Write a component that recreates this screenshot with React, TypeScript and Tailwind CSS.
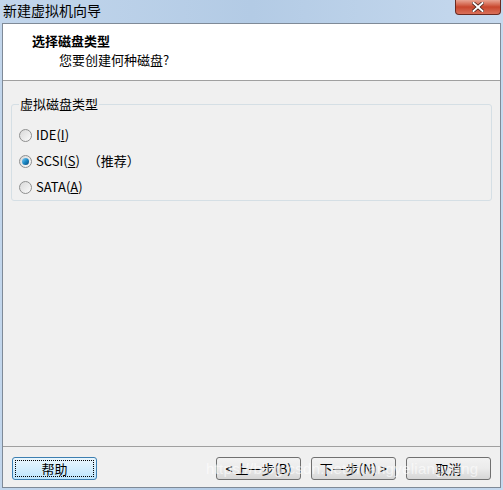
const font = {
  fontFamily: '"Noto Sans CJK SC", "DejaVu Sans", sans-serif',
};

const Radio = ({ checked = false }) => (
  <span className="relative flex h-[13px] w-[13px] items-center justify-center rounded-full border border-[#8e8f8f] bg-gradient-to-br from-[#d8d8d8] to-[#fbfbfb]">
    {checked && (
      <span className="h-[7px] w-[7px] rounded-full bg-gradient-to-br from-[#7fd0f5] via-[#1b8bc7] to-[#0b4a7c]" />
    )}
  </span>
);

const Button = ({
  children,
  focused = false,
}: {
  children: React.ReactNode;
  focused?: boolean;
}) => (
  <div
    className={`flex h-[23px] w-[85px] items-center justify-center rounded-[3px] border text-[13px] text-black ${
      focused
        ? "border-[#3c7fb1] bg-gradient-to-b from-[#eaf6fd] to-[#bee6fd]"
        : "border-[#707070] bg-gradient-to-b from-[#f2f2f2] via-[#ebebeb] to-[#d6d6d6]"
    }`}
  >
    {focused ? (
      <span className="flex h-[17px] w-[79px] items-center justify-center border border-dotted border-black">
        {children}
      </span>
    ) : (
      children
    )}
  </div>
);

const App = () => {
  return (
    <div
      className="relative flex h-[490px] w-[503px] flex-col overflow-hidden bg-gradient-to-r from-[#c2d6ec] via-[#b3cbe5] to-[#c6d9ee]"
      style={font}
    >
      {/* title bar */}
      <div className="relative flex h-[23px] shrink-0 items-start">
        <span className="pl-[3px] pt-[1px] text-[14px] leading-[18px] text-black">
          新建虚拟机向导
        </span>
        <div className="absolute right-[2px] top-0 flex h-[15px] w-[46px] items-center justify-center rounded-b-[4px] border border-t-0 border-[#6a2a20] bg-gradient-to-b from-[#e8a493] via-[#c8462c] to-[#d9705a]">
          <svg width="12" height="10" viewBox="0 0 12 10">
            <path
              d="M1.5 1 L10.5 9 M10.5 1 L1.5 9"
              stroke="#3a1a14"
              strokeWidth="3.4"
              strokeLinecap="square"
            />
            <path
              d="M1.5 1 L10.5 9 M10.5 1 L1.5 9"
              stroke="#ffffff"
              strokeWidth="2"
              strokeLinecap="square"
            />
          </svg>
        </div>
      </div>

      {/* client area */}
      <div className="mx-[2px] mb-[2px] flex flex-1 flex-col border border-[#7f8a97] bg-[#f0f0f0]">
        <div className="flex h-[57px] shrink-0 flex-col border-b border-[#a0a0a0] bg-white pl-[29px] pt-[8px]">
          <span className="text-[13px] font-bold leading-[18px] text-black">
            选择磁盘类型
          </span>
          <span className="pl-[27px] pt-[1px] text-[13px] leading-[18px] text-black">
            您要创建何种磁盘?
          </span>
        </div>

        <div className="flex flex-1 flex-col px-[8px] pt-[15px]">
          <fieldset className="rounded-[3px] border border-[#d5dfe5] px-[7px] pb-[4px] pt-[14px]">
            <legend className="px-[1px] text-[13px] leading-[16px] text-black">
              虚拟磁盘类型
            </legend>
            <div className="flex flex-col gap-[8px] text-[13px] leading-[18px] text-black">
              <div className="flex items-center gap-[4px]">
                <Radio />
                <span>
                  IDE(<span className="underline">I</span>)
                </span>
              </div>
              <div className="flex items-center gap-[4px]">
                <Radio checked />
                <span>
                  SCSI(<span className="underline">S</span>)
                </span>
                <span className="pl-[4px]">（推荐）</span>
              </div>
              <div className="flex items-center gap-[4px]">
                <Radio />
                <span>
                  SATA(<span className="underline">A</span>)
                </span>
              </div>
            </div>
          </fieldset>
        </div>

        <div className="flex h-[41px] shrink-0 items-start border-t border-[#a0a0a0] px-[9px] pt-[10px]">
          <Button focused>帮助</Button>
          <div className="ml-auto flex gap-[10px]">
            <Button>&lt; 上一步(B)</Button>
            <Button>下一步(N) &gt;</Button>
            <Button>取消</Button>
          </div>
        </div>
      </div>

      {/* watermark */}
      <span
        className="pointer-events-none absolute left-[206px] top-[459px] whitespace-nowrap text-[15px] leading-[20px] tracking-[0.3px] text-white/60"
        style={{ fontFamily: '"Liberation Sans", sans-serif' }}
      >
        https://blog.csdn.net/huangyelianguang
      </span>
    </div>
  );
};

export default App;
